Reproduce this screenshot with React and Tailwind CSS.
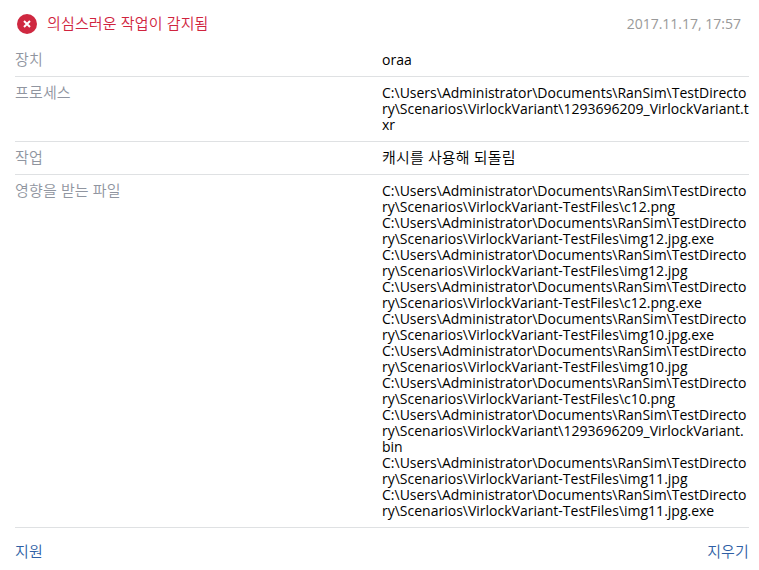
import React from "react";

const processPath =
  "C:\\Users\\Administrator\\Documents\\RanSim\\TestDirectory\\Scenarios\\VirlockVariant\\1293696209_VirlockVariant.txr";

const scenarios =
  "C:\\Users\\Administrator\\Documents\\RanSim\\TestDirectory\\Scenarios\\";

const affectedFiles = [
  "VirlockVariant-TestFiles\\c12.png",
  "VirlockVariant-TestFiles\\img12.jpg.exe",
  "VirlockVariant-TestFiles\\img12.jpg",
  "VirlockVariant-TestFiles\\c12.png.exe",
  "VirlockVariant-TestFiles\\img10.jpg.exe",
  "VirlockVariant-TestFiles\\img10.jpg",
  "VirlockVariant-TestFiles\\c10.png",
  "VirlockVariant\\1293696209_VirlockVariant.bin",
  "VirlockVariant-TestFiles\\img11.jpg",
  "VirlockVariant-TestFiles\\img11.jpg.exe",
];

//Korean text is set lighter and a bit larger than the latin text
function Korean({ children }) {
  return (
    <span className="block pb-[2px] text-[15px] leading-[14px] font-[350] tracking-[0.15px]">
      {children}
    </span>
  );
}

function Row({ label, children }) {
  return (
    <div className="flex border-b border-[#dfe1e3] py-2">
      <div className="w-[367px] shrink-0 text-[#9095a0]">
        <Korean>{label}</Korean>
      </div>
      <div className="min-w-0 flex-1 break-all text-black">{children}</div>
    </div>
  );
}

function App() {
  return (
    <div className="h-[570px] w-[759px] overflow-hidden bg-white pr-[10px] pl-[15px] font-['Open_Sans','Noto_Sans_CJK_KR',sans-serif] text-[14px] leading-4">
      <div className="flex h-11 items-center pt-1">
        <svg className="ml-[2px] h-5 w-5" viewBox="0 0 20 20">
          <circle cx="10" cy="10" r="10" fill="#cf2840" />
          <path d="M7 7l6 6M13 7l-6 6" stroke="white" strokeWidth="2" />
        </svg>
        <span className="ml-[10px] text-[#d0243e]">
          <Korean>의심스러운 작업이 감지됨</Korean>
        </span>
        <span className="mr-2 ml-auto text-[#999999]">2017.11.17, 17:57</span>
      </div>

      <Row label="장치">oraa</Row>
      <Row label="프로세스">{processPath}</Row>
      <Row label="작업">
        <Korean>캐시를 사용해 되돌림</Korean>
      </Row>
      <Row label="영향을 받는 파일">
        {affectedFiles.map((file) => (
          <div key={file}>{scenarios + file}</div>
        ))}
      </Row>

      <div className="flex justify-between pt-4 text-[#2f5fa5]">
        <button>
          <Korean>지원</Korean>
        </button>
        <button>
          <Korean>지우기</Korean>
        </button>
      </div>
    </div>
  );
}

export default App;
